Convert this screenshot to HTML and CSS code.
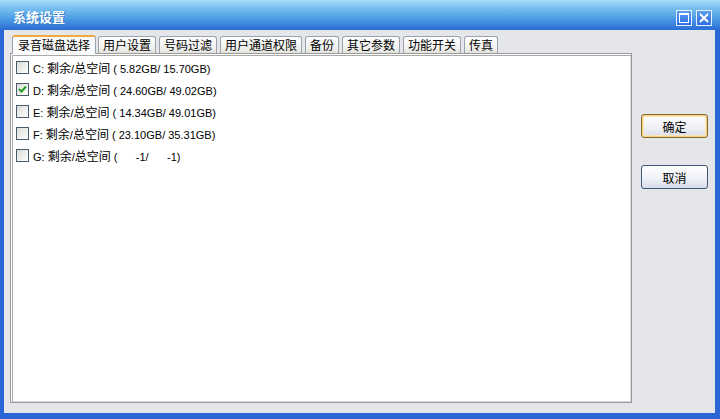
FILE: index.html
```html
<!DOCTYPE html>
<html lang="zh-CN">
<head>
    <meta charset="UTF-8">
    <title>系统设置</title>
    <link rel="stylesheet" href="styles.css">
</head>
<body>
    <div class="window">
        <div class="titlebar">
            <span class="title">系统设置</span>
            <div class="caption-buttons">
                <span class="cap-btn">
                    <svg width="10" height="10" viewBox="0 0 10 10"><rect x="0.5" y="0.5" width="9" height="9" fill="none" stroke="#fff" stroke-width="1"/><rect x="0" y="0" width="10" height="2" fill="#fff"/></svg>
                </span>
                <span class="cap-btn">
                    <svg width="10" height="10" viewBox="0 0 10 10"><path d="M1 1 L9 9 M9 1 L1 9" stroke="#fff" stroke-width="2"/></svg>
                </span>
            </div>
        </div>
        <div class="client">
            <div class="main">
                <ul class="tabs">
                    <li class="tab active">录音磁盘选择</li>
                    <li class="tab">用户设置</li>
                    <li class="tab">号码过滤</li>
                    <li class="tab">用户通道权限</li>
                    <li class="tab">备份</li>
                    <li class="tab">其它参数</li>
                    <li class="tab">功能开关</li>
                    <li class="tab">传真</li>
                </ul>
                <div class="panel">
                    <ul class="disk-list">
                        <li><span class="check"></span><span class="label">C: <span class="cjk">剩余</span>/<span class="cjk">总空间</span> ( 5.82GB/ 15.70GB)</span></li>
                        <li><span class="check checked"><svg width="11" height="11" viewBox="0 0 11 11"><path d="M2 5 L4.5 7.5 L9 2.5" fill="none" stroke="#21a121" stroke-width="2"/></svg></span><span class="label">D: <span class="cjk">剩余</span>/<span class="cjk">总空间</span> ( 24.60GB/ 49.02GB)</span></li>
                        <li><span class="check"></span><span class="label">E: <span class="cjk">剩余</span>/<span class="cjk">总空间</span> ( 14.34GB/ 49.01GB)</span></li>
                        <li><span class="check"></span><span class="label">F: <span class="cjk">剩余</span>/<span class="cjk">总空间</span> ( 23.10GB/ 35.31GB)</span></li>
                        <li><span class="check"></span><span class="label">G: <span class="cjk">剩余</span>/<span class="cjk">总空间</span> (      -1/      -1)</span></li>
                    </ul>
                </div>
            </div>
            <div class="side">
                <button class="btn default">确定</button>
                <button class="btn">取消</button>
            </div>
        </div>
    </div>
</body>
</html>
```

FILE: styles.css
```css
body {
    margin: 0;
    font-family: "Liberation Sans", "Noto Sans CJK SC", sans-serif;
    font-size: 12px;
    color: #000;
}
.window {
    width: 720px;
    height: 419px;
    box-sizing: border-box;
    display: flex;
    flex-direction: column;
    background: #2a64d4;
    border-left: 4px solid #2a66d6;
    border-right: 5px solid #2a66d6;
    border-bottom: 6px solid #2a66d6;
}
.titlebar {
    height: 30px;
    margin: 0 -5px 0 -4px;
    padding: 0 8px 0 13px;
    display: flex;
    align-items: center;
    justify-content: space-between;
    background: linear-gradient(to bottom, #a9dcf8 0%, #7cc2f0 25%, #4d9ee6 60%, #2a6cd4 100%);
}
.title {
    color: #fff;
    font-size: 13px;
    font-weight: bold;
    font-family: "Noto Sans CJK SC", sans-serif;
    text-shadow: 1px 1px 0 #3a7ccc;
    padding-top: 3px;
}
.caption-buttons {
    display: flex;
    gap: 4px;
    padding-top: 6px;
}
.cap-btn {
    width: 16px;
    height: 16px;
    box-sizing: border-box;
    border: 1px solid #e8f2ff;
    background: linear-gradient(to bottom, #5c9cf0, #2e6ee0);
    display: flex;
    align-items: center;
    justify-content: center;
}
.client {
    flex: 1;
    display: flex;
    background: #e5e6e9;
    padding: 5px 0 10px 6px;
}
.main {
    width: 622px;
    display: flex;
    flex-direction: column;
}
.tabs {
    list-style: none;
    margin: 0 0 0 2px;
    padding: 0;
    display: flex;
    align-items: flex-end;
    height: 18px;
}
.tab {
    height: 16px;
    line-height: 16px;
    padding: 0 4px;
    margin-right: 3px;
    border: 1px solid #9aa2ad;
    border-bottom: none;
    border-radius: 3px 3px 0 0;
    background: linear-gradient(to bottom, #ffffff, #f0f0ee 70%, #e2e2dc);
    font-family: "Noto Sans CJK SC", sans-serif;
    font-size: 12px;
}
.tab.active {
    height: 17px;
    padding: 0 5px;
    margin-right: 2px;
    border-top: 2px solid #f2a83a;
    background: #fbfbfb;
    position: relative;
    top: 1px;
}
.panel {
    flex: 1;
    background: #fff;
    border: 1px solid #9a9a9a;
    box-shadow: inset 1px 1px 0 #fff, inset 2px 2px 0 #a8a8a8, inset -1px -1px 0 #d8d8d8;
    padding: 7px 0 0 5px;
}
.disk-list {
    list-style: none;
    margin: 0;
    padding: 0;
}
.disk-list li {
    height: 22px;
    display: flex;
    align-items: flex-start;
}
.check {
    width: 13px;
    height: 13px;
    box-sizing: border-box;
    border: 1px solid #485c6e;
    background: linear-gradient(135deg, #dcdcd6, #ffffff);
    display: flex;
    align-items: center;
    justify-content: center;
    flex-shrink: 0;
}
.label {
    white-space: pre;
    margin-left: 4px;
    font-size: 11px;
    line-height: 14px;
}
.cjk {
    font-family: "Noto Sans CJK SC", sans-serif;
    font-size: 12px;
}
.side {
    flex: 1;
    display: flex;
    flex-direction: column;
    padding: 79px 0 0 9px;
    gap: 27px;
}
.btn {
    width: 67px;
    height: 24px;
    border: 1px solid #3c5874;
    border-radius: 3px;
    background: linear-gradient(to bottom, #ffffff, #eef0f6 60%, #d8dcea);
    font-family: "Noto Sans CJK SC", sans-serif;
    font-size: 12px;
    color: #000;
    padding: 0;
}
.btn.default {
    border-color: #8a6a2a;
    box-shadow: inset 0 0 0 1px #f5d08a, inset 0 0 0 2px #fbe6b6;
}
```
